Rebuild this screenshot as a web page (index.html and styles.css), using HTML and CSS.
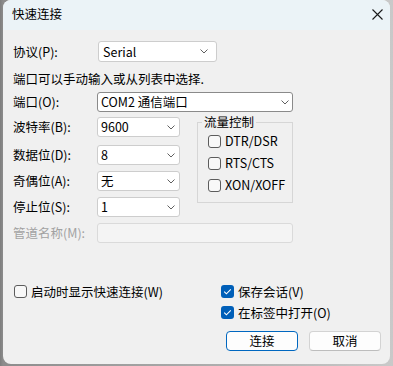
FILE: index.html
```html
<!DOCTYPE html>
<html lang="zh-CN">
<head>
  <meta charset="UTF-8">
  <title>快速连接</title>
  <meta name="viewport" content="width=device-width, initial-scale=1.0">
  <link rel="stylesheet" href="styles.css">
</head>
<body>
  <div class="window">
    <div class="titlebar">
      <span class="title">快速连接</span>
      <svg class="close" width="11" height="11" viewBox="0 0 11 11">
        <path d="M0.5 0.5 L10.5 10.5 M10.5 0.5 L0.5 10.5" stroke="#1a1a1a" stroke-width="1.1" fill="none"/>
      </svg>
    </div>

    <div class="content">
      <div class="row row-protocol">
        <span class="label">协议(P):</span>
        <div class="select protocol">
          <span>Serial</span>
          <svg class="chevron" width="8" height="5" viewBox="0 0 8 5"><path d="M0.5 0.5 L4 4 L7.5 0.5" stroke="#606060" fill="none"/></svg>
        </div>
      </div>

      <div class="hint">端口可以手动输入或从列表中选择.</div>

      <div class="row row-port">
        <span class="label">端口(O):</span>
        <div class="select combo">
          <span>COM2 通信端口</span>
          <svg class="chevron" width="8" height="5" viewBox="0 0 8 5"><path d="M0.5 0.5 L4 4 L7.5 0.5" stroke="#606060" fill="none"/></svg>
        </div>
      </div>

      <div class="serial">
        <div class="params">
          <div class="row">
            <span class="label">波特率(B):</span>
            <div class="select">
              <span>9600</span>
              <svg class="chevron" width="8" height="5" viewBox="0 0 8 5"><path d="M0.5 0.5 L4 4 L7.5 0.5" stroke="#606060" fill="none"/></svg>
            </div>
          </div>
          <div class="row row-data">
            <span class="label">数据位(D):</span>
            <div class="select">
              <span>8</span>
              <svg class="chevron" width="8" height="5" viewBox="0 0 8 5"><path d="M0.5 0.5 L4 4 L7.5 0.5" stroke="#606060" fill="none"/></svg>
            </div>
          </div>
          <div class="row row-gap">
            <span class="label">奇偶位(A):</span>
            <div class="select">
              <span>无</span>
              <svg class="chevron" width="8" height="5" viewBox="0 0 8 5"><path d="M0.5 0.5 L4 4 L7.5 0.5" stroke="#606060" fill="none"/></svg>
            </div>
          </div>
          <div class="row row-gap">
            <span class="label">停止位(S):</span>
            <div class="select">
              <span>1</span>
              <svg class="chevron" width="8" height="5" viewBox="0 0 8 5"><path d="M0.5 0.5 L4 4 L7.5 0.5" stroke="#606060" fill="none"/></svg>
            </div>
          </div>
        </div>

        <fieldset class="flow">
          <legend>流量控制</legend>
          <label class="check"><span class="box"></span>DTR/DSR</label>
          <label class="check"><span class="box"></span>RTS/CTS</label>
          <label class="check"><span class="box"></span>XON/XOFF</label>
        </fieldset>
      </div>

      <div class="row row-gap disabled">
        <span class="label">管道名称(M):</span>
        <div class="input"></div>
      </div>

      <div class="options">
        <div class="opt-left">
          <label class="check"><span class="box"></span>启动时显示快速连接(W)</label>
        </div>
        <div class="opt-right">
          <label class="check">
            <span class="box checked">
              <svg width="13" height="13" viewBox="0 0 13 13"><path d="M3.2 6.6 L5.4 8.8 L9.8 4.3" stroke="#fff" stroke-width="1.1" fill="none"/></svg>
            </span>保存会话(V)
          </label>
          <label class="check">
            <span class="box checked">
              <svg width="13" height="13" viewBox="0 0 13 13"><path d="M3.2 6.6 L5.4 8.8 L9.8 4.3" stroke="#fff" stroke-width="1.1" fill="none"/></svg>
            </span>在标签中打开(O)
          </label>
        </div>
      </div>

      <div class="buttons">
        <button class="btn primary">连接</button>
        <button class="btn">取消</button>
      </div>
    </div>
  </div>
</body>
</html>
```

FILE: styles.css
```css
body {
  margin: 0;
  background: linear-gradient(90deg, #7e7e7e 0, #8c8c8c 3px, #c9c9c9 100%);
  font-family: "Noto Sans CJK SC", sans-serif;
  font-size: 12.5px;
  color: #000;
}

.window {
  margin-left: 3px;
  width: 387px;
  height: 364px;
  border-radius: 8px;
  background: #f0f0f0;
  overflow: hidden;
}

.titlebar {
  height: 30px;
  background: #ebf3f7;
  display: flex;
  align-items: center;
  justify-content: space-between;
  padding: 0 7px 0 9px;
}

.title {
  line-height: 16px;
  margin-top: -2px;
}

.close {
  margin-top: -1px;
}

.content {
  padding: 11px 0 0 10px;
}

.row {
  display: flex;
  align-items: center;
  height: 20px;
}

.row-protocol {
  height: 21px;
}

.row-port {
  margin-top: 5px;
}

.row-data {
  margin-top: 8px;
}

.row-gap {
  margin-top: 6px;
}

.label {
  width: 84px;
  flex-shrink: 0;
  line-height: 16px;
}

.hint {
  margin-top: 9px;
  line-height: 16px;
  height: 16px;
}

.select {
  box-sizing: border-box;
  width: 83px;
  height: 100%;
  background: #fff;
  border: 1px solid #cdcdcd;
  border-radius: 3px;
  display: flex;
  align-items: center;
  justify-content: space-between;
  padding: 0 4px 0 3px;
  line-height: 16px;
}

.select .chevron {
  margin-right: 0;
}

.protocol {
  width: 119px;
  margin-left: 1px;
  padding-left: 4px;
  padding-right: 8px;
}

.combo {
  width: 196px;
  border-color: #8a8a8a;
  padding-right: 3px;
}

.serial {
  display: flex;
  align-items: flex-start;
  margin-top: 5px;
}

.params {
  width: 167px;
}

.flow {
  box-sizing: border-box;
  width: 96px;
  margin: -2px 0 0 17px;
  padding: 1px 0 6px 4px;
  border: 1px solid #d6d6d6;
  min-inline-size: 0;
}

.flow legend {
  padding: 0 2px;
  line-height: 14px;
}

.flow .check {
  height: 22px;
  margin-left: 6px;
}

.check {
  display: flex;
  align-items: center;
  gap: 4px;
  height: 21px;
  line-height: 16px;
  white-space: nowrap;
}

.box {
  box-sizing: border-box;
  width: 13px;
  height: 13px;
  flex-shrink: 0;
  border: 1px solid #5c5c5c;
  border-radius: 3px;
  background: #f8f8f8;
  display: flex;
}

.box.checked {
  border: none;
  background: #005fb8;
}

.disabled .label {
  color: #a2a2a2;
}

.input {
  box-sizing: border-box;
  width: 196px;
  height: 100%;
  border: 1px solid #dadada;
  border-radius: 3px;
  background: #f4f4f4;
}

.options {
  display: flex;
  margin-top: 38px;
}

.opt-left {
  width: 208px;
  padding-left: 1px;
  box-sizing: border-box;
}

.buttons {
  display: flex;
  justify-content: flex-end;
  gap: 11px;
  margin-top: 8px;
  padding-right: 9px;
}

.btn {
  box-sizing: border-box;
  width: 72px;
  height: 20px;
  padding: 0;
  font-family: inherit;
  font-size: 12.5px;
  line-height: 16px;
  color: #000;
  background: #fdfdfd;
  border: 1px solid #d3d3d3;
  border-bottom-color: #bdbdbd;
  border-radius: 4px;
}

.btn.primary {
  border: 1px solid #0067c0;
}
```
